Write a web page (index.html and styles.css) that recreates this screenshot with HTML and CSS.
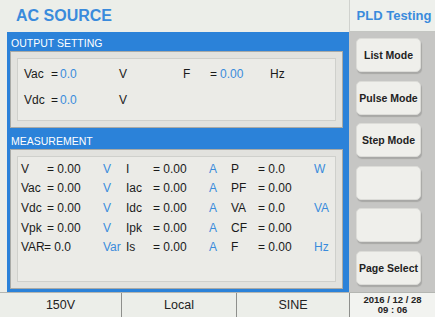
FILE: index.html
```html
<!DOCTYPE html>
<html lang="en">
<head>
    <meta charset="UTF-8">
    <meta name="viewport" content="width=device-width, initial-scale=1.0">
    <title>AC Source</title>
    <link rel="stylesheet" href="styles.css">
</head>
<body>
    <div class="screen">
        <div class="title">AC SOURCE</div>
        <div class="mode-title">PLD Testing</div>

        <div class="main">
            <div class="panel">
                <div class="section-head">OUTPUT SETTING</div>
                <div class="box box-output">
                    <div class="out-grid">
                        <span>Vac</span><span>=</span><span class="val">0.0</span><span>V</span>
                        <span>F</span><span>=</span><span class="val">0.00</span><span>Hz</span>
                        <span>Vdc</span><span>=</span><span class="val">0.0</span><span>V</span>
                        <span></span><span></span><span></span><span></span>
                    </div>
                </div>
                <div class="section-head section-head-low">MEASUREMENT</div>
                <div class="box box-meas">
                    <div class="meas-grid">
                        <span>V</span><span>= 0.00</span><span class="unit">V</span>
                        <span>I</span><span>= 0.00</span><span class="unit">A</span>
                        <span>P</span><span>= 0.0</span><span class="unit">W</span>

                        <span>Vac</span><span>= 0.00</span><span class="unit">V</span>
                        <span>Iac</span><span>= 0.00</span><span class="unit">A</span>
                        <span>PF</span><span>= 0.00</span><span class="unit"></span>

                        <span>Vdc</span><span>= 0.00</span><span class="unit">V</span>
                        <span>Idc</span><span>= 0.00</span><span class="unit">A</span>
                        <span>VA</span><span>= 0.0</span><span class="unit">VA</span>

                        <span>Vpk</span><span>= 0.00</span><span class="unit">V</span>
                        <span>Ipk</span><span>= 0.00</span><span class="unit">A</span>
                        <span>CF</span><span>= 0.00</span><span class="unit"></span>

                        <span>VAR</span><span class="tight">= 0.0</span><span class="unit">Var</span>
                        <span>Is</span><span>= 0.00</span><span class="unit">A</span>
                        <span>F</span><span>= 0.00</span><span class="unit">Hz</span>
                    </div>
                </div>
            </div>
        </div>

        <div class="side">
            <button class="soft-key">List Mode</button>
            <button class="soft-key">Pulse Mode</button>
            <button class="soft-key">Step Mode</button>
            <button class="soft-key"></button>
            <button class="soft-key"></button>
            <button class="soft-key">Page Select</button>
        </div>

        <div class="status-bar">
            <div class="cell">150V</div>
            <div class="cell">Local</div>
            <div class="cell">SINE</div>
            <div class="cell date">2016 / 12 / 28<br>09 : 06</div>
        </div>
    </div>
</body>
</html>
```

FILE: styles.css
```css
body {
    margin: 0;
    font-family: "Liberation Sans", Arial, sans-serif;
    background-color: #eceee9;
}

.screen {
    width: 435px;
    height: 317px;
    display: grid;
    grid-template-columns: 349px 86px;
    grid-template-rows: 32px 260px 25px;
    background-color: #eceee9;
    overflow: hidden;
}

.title {
    padding-left: 16px;
    display: flex;
    align-items: center;
    font-size: 16px;
    font-weight: bold;
    color: #3a8bdc;
}

.mode-title {
    display: flex;
    align-items: center;
    justify-content: center;
    padding-left: 3px;
    font-size: 13px;
    font-weight: bold;
    color: #3a8bdc;
    background-color: #eef0ec;
    border-left: 1px solid #d0d2ce;
    border-bottom: 1px solid #c4c6c2;
}

.main {
    padding-left: 7px;
}

.panel {
    height: 100%;
    box-sizing: border-box;
    background-color: #2b82d9;
    padding: 0 6px 3px 3px;
    display: flex;
    flex-direction: column;
}

.section-head {
    height: 19px;
    box-sizing: border-box;
    display: flex;
    align-items: center;
    padding: 3px 0 0 1px;
    color: #ffffff;
    font-size: 10.5px;
}

.section-head-low {
    height: 21px;
    padding-top: 4px;
}

.box {
    box-sizing: border-box;
    background-color: #ebebe7;
    border: 1px solid #a9aaa6;
    box-shadow: inset 0 0 0 6px #e2e2de, inset 0 0 0 7px #cfd0cc;
    font-size: 12px;
    color: #1a1a1a;
}

.box-output {
    height: 77px;
    padding: 9px 0 0 13px;
}

.box-meas {
    flex: 1;
    padding: 9px 0 0 10px;
}

.out-grid {
    display: grid;
    grid-template-columns: 27px 9px 59px 64px 27px 10px 50px 20px;
    grid-auto-rows: 26px;
    align-items: center;
}

.val {
    color: #3a8bdc;
}

.meas-grid {
    display: grid;
    grid-template-columns: 26px 56px 23px 27px 56px 22px 27px 56px 20px;
    grid-auto-rows: 19.6px;
    align-items: center;
}

.unit {
    color: #3a8bdc;
}

.tight {
    margin-left: -3px;
}

.side {
    background-color: #c6c6c4;
    padding: 6px 0 0 7px;
    display: flex;
    flex-direction: column;
    gap: 8.5px;
}

.soft-key {
    width: 65px;
    height: 34px;
    padding: 0;
    background-color: #efefeb;
    border: 1px solid #dcdcd8;
    border-radius: 5px;
    box-shadow: 1px 2px 1px #a8a8a6;
    font-family: "Liberation Sans", Arial, sans-serif;
    font-size: 10.5px;
    font-weight: bold;
    color: #222222;
}

.status-bar {
    grid-column: 1 / 3;
    display: grid;
    grid-template-columns: 121px 115px 113px 86px;
    background-color: #eceee9;
    border-top: 1px solid #b4b6b2;
}

.cell {
    display: flex;
    align-items: center;
    justify-content: center;
    font-size: 12.5px;
    color: #222222;
    border-left: 1px solid #8e8f8c;
}

.cell:first-child {
    border-left: none;
}

.date {
    font-size: 9.5px;
    font-weight: bold;
    line-height: 10px;
    text-align: center;
    background-color: #f2f3f0;
}
```
